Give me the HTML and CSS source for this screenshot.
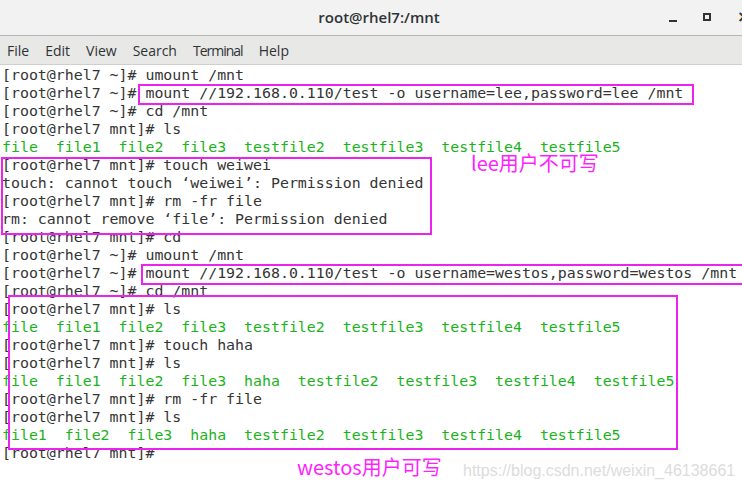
FILE: index.html
```html
<!DOCTYPE html>
<html>
<head>
<meta charset="utf-8">
<link rel="stylesheet" href="styles.css">
</head>
<body>
<div class="window">
  <header class="titlebar">
    <div class="title">root@rhel7:/mnt</div>
    <div class="controls">
      <span class="ctl min"></span>
      <span class="ctl max"></span>
      <span class="ctl close">×</span>
    </div>
  </header>
  <nav class="menubar">
    <span>File</span><span>Edit</span><span>View</span><span>Search</span><span class="tight">Terminal</span><span>Help</span>
  </nav>
  <main class="term">
    <div class="ln">[root@rhel7 ~]# umount /mnt</div>
    <div class="ln">[root@rhel7 ~]# mount //192.168.0.110/test -o username=lee,password=lee /mnt</div>
    <div class="ln">[root@rhel7 ~]# cd /mnt</div>
    <div class="ln">[root@rhel7 mnt]# ls</div>
    <div class="ln g">file  file1  file2  file3  testfile2  testfile3  testfile4  testfile5</div>
    <div class="ln">[root@rhel7 mnt]# touch weiwei</div>
    <div class="ln">touch: cannot touch ‘weiwei’: Permission denied</div>
    <div class="ln">[root@rhel7 mnt]# rm -fr file</div>
    <div class="ln">rm: cannot remove ‘file’: Permission denied</div>
    <div class="ln">[root@rhel7 mnt]# cd</div>
    <div class="ln">[root@rhel7 ~]# umount /mnt</div>
    <div class="ln">[root@rhel7 ~]# mount //192.168.0.110/test -o username=westos,password=westos /mnt</div>
    <div class="ln">[root@rhel7 ~]# cd /mnt</div>
    <div class="ln">[root@rhel7 mnt]# ls</div>
    <div class="ln g">file  file1  file2  file3  testfile2  testfile3  testfile4  testfile5</div>
    <div class="ln">[root@rhel7 mnt]# touch haha</div>
    <div class="ln">[root@rhel7 mnt]# ls</div>
    <div class="ln g">file  file1  file2  file3  haha  testfile2  testfile3  testfile4  testfile5</div>
    <div class="ln">[root@rhel7 mnt]# rm -fr file</div>
    <div class="ln">[root@rhel7 mnt]# ls</div>
    <div class="ln g">file1  file2  file3  haha  testfile2  testfile3  testfile4  testfile5</div>
    <div class="ln">[root@rhel7 mnt]# </div>
    <div class="box b1"></div>
    <div class="box b2"></div>
    <div class="box b3"></div>
    <div class="box b4"></div>
    <div class="note n1">lee用户不可写</div>
    <div class="note n2">westos用户可写</div>
    <div class="wm">https://blog.csdn.net/weixin_46138661</div>
  </main>
</div>
</body>
</html>
```
FILE: styles.css
```css
html, body {
  margin: 0;
  padding: 0;
  background: #ffffff;
  overflow: hidden;
}
.window {
  width: 742px;
  height: 491px;
  display: flex;
  flex-direction: column;
  overflow: hidden;
}
.titlebar {
  height: 35px;
  flex: 0 0 35px;
  background: #f2f2f2;
  border-bottom: 1px solid #b4b4b2;
  position: relative;
  display: flex;
  align-items: center;
  justify-content: center;
}
.title {
  font-family: "Open Sans", "DejaVu Sans", sans-serif;
  font-size: 15px;
  font-weight: 600;
  color: #2e3436;
  margin-left: 16px;
  margin-top: -1px;
}
.controls {
  position: absolute;
  right: -7px;
  top: 0;
  height: 35px;
  display: flex;
  align-items: center;
  gap: 26px;
}
.ctl {
  display: block;
  position: relative;
}
.min {
  width: 8px;
  height: 2px;
  background: #2e3436;
  margin-top: 7px;
}
.max {
  width: 4px;
  height: 4px;
  border: 2px solid #2e3436;
  margin-top: -2px;
}
.close {
  font-family: "DejaVu Sans", sans-serif;
  font-size: 16px;
  font-weight: bold;
  color: #2e3436;
  width: 12px;
  margin-top: -3px;
}
.menubar {
  height: 28px;
  flex: 0 0 28px;
  background: #e8e8e7;
  border-bottom: 1px solid #cfcfcd;
  display: flex;
  align-items: center;
  padding-left: 7px;
  gap: 16px;
  font-family: "Open Sans", "DejaVu Sans", sans-serif;
  font-size: 14px;
  color: #2e3436;
}
.menubar span {
  display: block;
}
.menubar .tight {
  letter-spacing: -1px;
}
.term {
  position: relative;
  flex: 1;
  padding: 1px 0 0 2px;
  font-family: "DejaVu Sans Mono", monospace;
  font-size: 14.9px;
  line-height: 18px;
  color: #353535;
}
.ln {
  height: 18px;
  white-space: pre;
}
.g {
  color: #1bb31b;
}
.box {
  position: absolute;
  border: 2px solid #ee22ee;
  box-sizing: border-box;
}
.b1 { left: 138px; top: 19px; width: 556px; height: 21px; }
.b2 { left: 1px; top: 92px; width: 431px; height: 78px; }
.b3 { left: 141px; top: 199px; width: 640px; height: 21px; }
.b4 { left: 8px; top: 230px; width: 670px; height: 155px; }
.note {
  position: absolute;
  font-family: "Noto Sans CJK SC", "Noto Sans", sans-serif;
  font-size: 20px;
  line-height: 24px;
  color: #ff1fff;
}
.n1 { left: 471px; top: 86px; }
.n2 { left: 297px; top: 390px; }
.wm {
  position: absolute;
  left: 463px;
  top: 397px;
  font-family: "Liberation Sans", Arial, sans-serif;
  font-size: 16px;
  color: #dcdcdc;
}
```
